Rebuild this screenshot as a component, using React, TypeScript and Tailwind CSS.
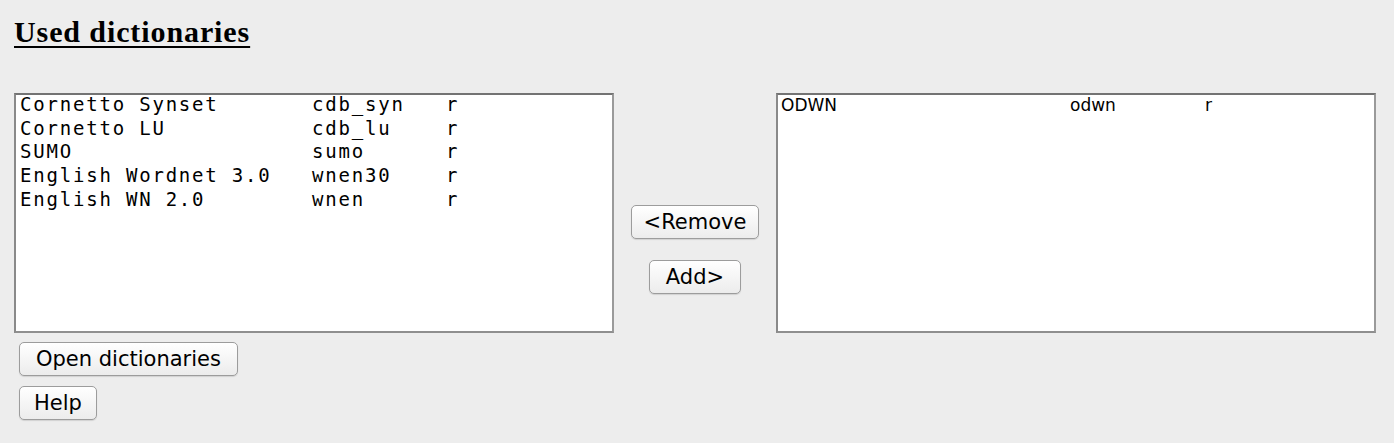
import React from 'react'

type Dict = {
  name: string
  code: string
  mode: string
}

const used: Dict[] = [
  { name: 'Cornetto Synset', code: 'cdb_syn', mode: 'r' },
  { name: 'Cornetto LU', code: 'cdb_lu', mode: 'r' },
  { name: 'SUMO', code: 'sumo', mode: 'r' },
  { name: 'English Wordnet 3.0', code: 'wnen30', mode: 'r' },
  { name: 'English WN 2.0', code: 'wnen', mode: 'r' },
]

const available: Dict[] = [{ name: 'ODWN', code: 'odwn', mode: 'r' }]

const btn =
  'h-[34px] rounded-[5px] border border-[#9c9c9c] bg-gradient-to-b from-white to-[#ececec] text-[21px] leading-none text-black shadow-[0_1px_1px_rgba(0,0,0,0.12)] [font-family:"DejaVu_Sans",Verdana,sans-serif]'

const box =
  'h-[240px] w-[600px] border-2 border-t-[#737373] border-l-[#8a8a8a] border-r-[#9a9a9a] border-b-[#8f8f8f] bg-white'

export default function App() {
  return (
    <div className="min-h-[443px] bg-[#ededed] px-[14px] pt-[15px] text-black">
      <h2 className="text-[30px] font-bold leading-[34px] tracking-[0.9px] underline decoration-2 underline-offset-[4px] [font-family:'Liberation_Serif','Times_New_Roman',serif]">
        Used dictionaries
      </h2>

      <div className="mt-[44px] flex">
        <div className="flex flex-col">
          <div className={box}>
            <div className="-mt-[2px] px-[4px] text-[19px] leading-[23.7px] tracking-[1.8px] [font-family:'DejaVu_Sans_Mono',monospace]">
              {used.map((d) => (
                <div key={d.code} className="grid grid-cols-[292px_134px_1fr] whitespace-pre">
                  <span>{d.name}</span>
                  <span>{d.code}</span>
                  <span>{d.mode}</span>
                </div>
              ))}
            </div>
          </div>
          <div className="mt-[9px] flex flex-col items-start gap-[10px] pl-[5px]">
            <button className={btn + ' px-[16px]'}>Open dictionaries</button>
            <button className={btn + ' px-[14px]'}>Help</button>
          </div>
        </div>

        <div className="flex w-[162px] flex-col items-center gap-[21px] pt-[112px]">
          <button className={btn + ' px-[12px]'}>&lt;Remove</button>
          <button className={btn + ' px-[16px]'}>Add&gt;</button>
        </div>

        <div className={box}>
          <table className="text-[17px] leading-[20px] [font-family:'DejaVu_Sans',Verdana,sans-serif]">
            <tbody>
              {available.map((d) => (
                <tr key={d.code}>
                  <td className="w-[292px] p-0 pl-[3px]">{d.name}</td>
                  <td className="w-[135px] p-0">{d.code}</td>
                  <td className="p-0">{d.mode}</td>
                </tr>
              ))}
            </tbody>
          </table>
        </div>
      </div>
    </div>
  )
}
